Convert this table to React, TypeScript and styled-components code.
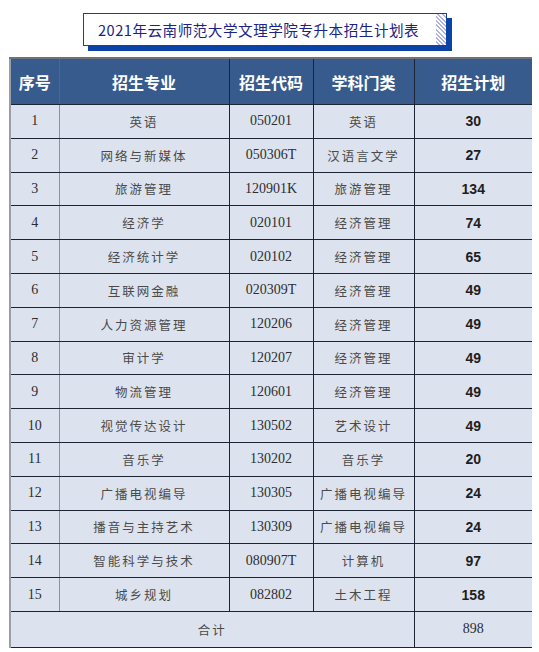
import styled, { createGlobalStyle } from "styled-components";

/* ─────────────────── data ─────────────────── */

type Row = {
  no: number;
  major: string;
  code: string;
  category: string;
  plan: number;
};

const rows: Row[] = [
  { no: 1, major: "英语", code: "050201", category: "英语", plan: 30 },
  { no: 2, major: "网络与新媒体", code: "050306T", category: "汉语言文学", plan: 27 },
  { no: 3, major: "旅游管理", code: "120901K", category: "旅游管理", plan: 134 },
  { no: 4, major: "经济学", code: "020101", category: "经济管理", plan: 74 },
  { no: 5, major: "经济统计学", code: "020102", category: "经济管理", plan: 65 },
  { no: 6, major: "互联网金融", code: "020309T", category: "经济管理", plan: 49 },
  { no: 7, major: "人力资源管理", code: "120206", category: "经济管理", plan: 49 },
  { no: 8, major: "审计学", code: "120207", category: "经济管理", plan: 49 },
  { no: 9, major: "物流管理", code: "120601", category: "经济管理", plan: 49 },
  { no: 10, major: "视觉传达设计", code: "130502", category: "艺术设计", plan: 49 },
  { no: 11, major: "音乐学", code: "130202", category: "音乐学", plan: 20 },
  { no: 12, major: "广播电视编导", code: "130305", category: "广播电视编导", plan: 24 },
  { no: 13, major: "播音与主持艺术", code: "130309", category: "广播电视编导", plan: 24 },
  { no: 14, major: "智能科学与技术", code: "080907T", category: "计算机", plan: 97 },
  { no: 15, major: "城乡规划", code: "082802", category: "土木工程", plan: 158 },
];

const total = rows.reduce((sum, r) => sum + r.plan, 0);

/* ─────────────────── component ─────────────────── */

export default function App() {
  return (
    <Page>
      <GlobalStyle />

      {/* title */}
      <TitleRow>
        <TitleBox>
          <TitleText>2021年云南师范大学文理学院专升本招生计划表</TitleText>
          <Hatch />
        </TitleBox>
      </TitleRow>

      {/* table */}
      <Table>
        <colgroup>
          <col style={{ width: 49 }} />
          <col style={{ width: 170 }} />
          <col style={{ width: 84 }} />
          <col style={{ width: 101 }} />
          <col style={{ width: 118 }} />
        </colgroup>
        <thead>
          <tr>
            <Th $soft>序号</Th>
            <Th>招生专业</Th>
            <Th>招生代码</Th>
            <Th>学科门类</Th>
            <Th>招生计划</Th>
          </tr>
        </thead>
        <tbody>
          {rows.map((r) => (
            <tr key={r.no}>
              <NoCell>{r.no}</NoCell>
              <CnCell>{r.major}</CnCell>
              <NumCell>{r.code}</NumCell>
              <CnCell>{r.category}</CnCell>
              <PlanCell>{r.plan}</PlanCell>
            </tr>
          ))}
          <TotalRow>
            <TotalLabel colSpan={4}>合计</TotalLabel>
            <NumCell>{total}</NumCell>
          </TotalRow>
        </tbody>
      </Table>
    </Page>
  );
}

/* ───────────── styled components ───────────── */

const GlobalStyle = createGlobalStyle`
  html, body {
    margin: 0;
    padding: 0;
    background: #ffffff;
  }
  body {
    font-family: "Noto Sans CJK SC", "Noto Sans", sans-serif;
  }
`;

const Page = styled.div`
  width: 539px;
  padding-top: 13px;
`;

const TitleRow = styled.div`
  display: flex;
  padding-left: 83px;
`;

const TitleBox = styled.div`
  position: relative;
  display: flex;
  align-items: center;
  width: 362px;
  height: 31px;
  border: 1px solid #0b45a8;
  background: #ffffff;
  box-shadow: 5px 5px 0 #0a42a6;
`;

const TitleText = styled.div`
  padding-left: 14px;
  font-family: "Noto Sans CJK SC", sans-serif;
  font-size: 14.6px;
  letter-spacing: 0.5px;
  color: #1c2384;
  white-space: nowrap;
`;

const Hatch = styled.div`
  position: absolute;
  top: 0;
  right: 0;
  bottom: 0;
  width: 10px;
  background: repeating-linear-gradient(
    45deg,
    #ffffff 0 1.5px,
    #aeb3e3 1.5px 3px
  );
`;

const Table = styled.table`
  margin: 11px 0 0 9px;
  width: 522px;
  table-layout: fixed;
  border-collapse: collapse;
  background: #dde3ee;
  border-left: 2px solid #9a9ea6;
  border-top: 2px solid #6f7278;
  border-bottom: 1px solid #1d2433;
`;

const Th = styled.th<{ $soft?: boolean }>`
  height: 45px;
  padding: 0;
  background: #375b8d;
  color: #ffffff;
  font-family: "Noto Sans CJK SC", sans-serif;
  font-size: 16px;
  font-weight: 700;
  text-align: center;
  border-right: 1px solid ${(p) => (p.$soft ? "#5d6470" : "#1d2433")};
  border-bottom: 1px solid #1d2433;
  &:last-child {
    border-right: none;
  }
`;

const Td = styled.td`
  height: 32.8px;
  padding: 0;
  text-align: center;
  color: #2e2e2e;
  border-right: 1px solid #1d2433;
  border-bottom: 1px solid #1d2433;
  &:last-child {
    border-right: none;
  }
`;

const NoCell = styled(Td)`
  font-family: "Liberation Serif", serif;
  font-size: 14px;
  border-right-color: #8e929a;
`;

const CnCell = styled(Td)`
  font-family: "Noto Sans CJK SC", sans-serif;
  font-size: 12.5px;
  letter-spacing: 2px;
  color: #4a4a4a;
`;

const NumCell = styled(Td)`
  font-family: "Liberation Serif", serif;
  font-size: 14px;
`;

const PlanCell = styled(Td)`
  font-family: "Liberation Sans", sans-serif;
  font-size: 14px;
  font-weight: 700;
  color: #1e1e1e;
`;

const TotalRow = styled.tr`
  & > td {
    height: 35px;
  }
`;

const TotalLabel = styled(CnCell)`
  border-bottom: none;
`;
